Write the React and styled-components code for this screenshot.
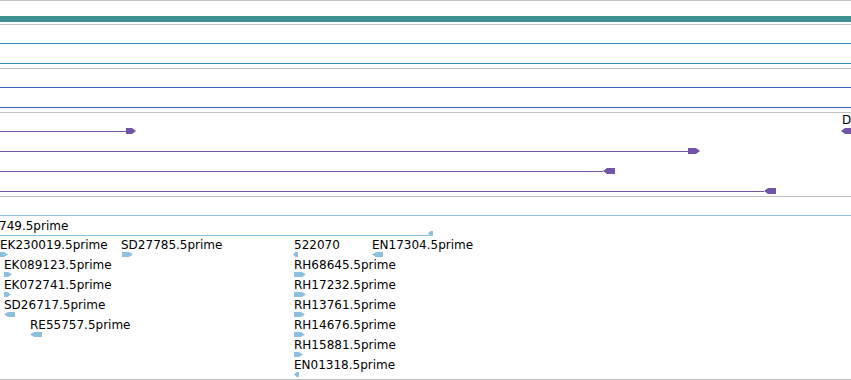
import React from "react";
import styled, { createGlobalStyle } from "styled-components";

const GlobalStyle = createGlobalStyle`
  html, body {
    margin: 0;
    padding: 0;
    background: #fff;
  }
  body {
    font-family: "DejaVu Sans", sans-serif;
    overflow: hidden;
  }
`;

const Browser = styled.div`
  width: 851px;
  height: 380px;
  display: flex;
  flex-direction: column;
  overflow: hidden;
  background: #fff;
`;

const Track = styled.div`
  position: relative;
  flex: none;
  box-sizing: border-box;
  display: flex;
  flex-direction: column;
  height: ${(p) => p.$h}px;
  padding-top: ${(p) => p.$pad || 0}px;
  border-top: 1px solid #c0c0c0;
  border-bottom: ${(p) => (p.$last ? "1px solid #c0c0c0" : "none")};
  overflow: hidden;
  box-sizing: content-box;
`;

// one 20px lane of a track; a 1px feature line sits 10px down
const Lane = styled.div`
  position: relative;
  flex: none;
  height: 20px;
  display: flex;
  align-items: flex-start;
`;

const Line = styled.div`
  flex: none;
  width: ${(p) => (p.$w ? `${p.$w}px` : "100%")};
  height: ${(p) => p.$thick || 1}px;
  margin-top: ${(p) => p.$mt ?? 10}px;
  background: ${(p) => p.$color};
`;

const Strand = styled.svg`
  flex: none;
  display: block;
  overflow: visible;
  margin-top: ${(p) => p.$mt || 0}px;
  margin-left: ${(p) => p.$ml || 0}px;
`;

const Label = styled.div`
  flex: none;
  font-size: 12px;
  line-height: 14px;
  color: #000;
  white-space: nowrap;
  margin-top: ${(p) => p.$mt || 0}px;
  margin-left: ${(p) => p.$ml || 0}px;
`;

// a named feature: label with its strand glyph under it, placed at its
// coordinate on the track
const Feature = styled.div.attrs((p) => ({ style: { left: p.$x } }))`
  position: absolute;
  top: ${(p) => p.$top || 0}px;
  display: flex;
  flex-direction: column;
  align-items: flex-start;
  gap: ${(p) => p.$gap || 0}px;
`;

const EndRow = styled.div`
  flex: none;
  height: 1px;
  display: flex;
  align-items: flex-end;
  margin-top: 2px;
  margin-bottom: 1px;
`;

const TEAL = "#3f9090";
const CYAN = "#2a8fae";
const BLUE = "#3a68bb";
const PURPLE = "#7254a8";
const LIGHT = "#8cbfe0";

function Arrow({ w, h = 6, dir = "r", color, ...rest }) {
  const tip = Math.min(4, w / 2);
  const pts =
    dir === "r"
      ? `0,0 ${w - tip},0 ${w},${h / 2} ${w - tip},${h} 0,${h}`
      : `${tip},0 ${w},0 ${w},${h} ${tip},${h} 0,${h / 2}`;
  return (
    <Strand width={w} height={h} {...rest}>
      <polygon points={pts} fill={color} />
    </Strand>
  );
}

const purple = [
  { end: 127, aw: 10, ml: -1, dir: "r" },
  { end: 690, aw: 12, ml: -2, dir: "r" },
  { end: 603, aw: 12, ml: 0, dir: "l" },
  { end: 764, aw: 12, ml: 0, dir: "l" },
];

const lanes = [
  [
    { x: 0, t: "EK230019.5prime", w: 8, dir: "r" },
    { x: 121, t: "SD27785.5prime", gx: 1, w: 11, dir: "r" },
    { x: 294, t: "522070", gx: -1, w: 5, dir: "l" },
    { x: 372, t: "EN17304.5prime", w: 11, dir: "l" },
  ],
  [
    { x: 4, t: "EK089123.5prime", w: 8, dir: "r" },
    { x: 294, t: "RH68645.5prime", w: 12, dir: "r" },
  ],
  [
    { x: 4, t: "EK072741.5prime", w: 7, dir: "r" },
    { x: 294, t: "RH17232.5prime", w: 12, dir: "r" },
  ],
  [
    { x: 4, t: "SD26717.5prime", w: 11, dir: "l" },
    { x: 294, t: "RH13761.5prime", w: 11, dir: "r" },
  ],
  [
    { x: 30, t: "RE55757.5prime", w: 12, dir: "l" },
    { x: 294, t: "RH14676.5prime", w: 11, dir: "r" },
  ],
  [{ x: 294, t: "RH15881.5prime", w: 9, dir: "r" }],
  [{ x: 294, t: "EN01318.5prime", w: 5, dir: "l" }],
];

export default function App() {
  return (
    <>
      <GlobalStyle />
      <Browser>
        <Track $h={8} $pad={15}>
          <Line $thick={6} $mt={0} $color={TEAL} />
        </Track>
        <Track $h={35} $pad={8}>
          <Lane>
            <Line $color={CYAN} />
          </Lane>
          <Lane>
            <Line $color={CYAN} />
          </Lane>
        </Track>
        <Track $h={35} $pad={8}>
          <Lane>
            <Line $color={BLUE} />
          </Lane>
          <Lane>
            <Line $color={BLUE} />
          </Lane>
        </Track>
        <Track $h={75} $pad={8}>
          {purple.map((f, i) => (
            <Lane key={i}>
              <Line $w={f.end} $color={PURPLE} />
              <Arrow w={f.aw} dir={f.dir} color={PURPLE} $mt={7} $ml={f.ml} />
            </Lane>
          ))}
          <Feature $x={842} $top={0} $gap={1}>
            <Label>D</Label>
            <Arrow w={12} dir="l" color={PURPLE} $ml={-1} />
          </Feature>
        </Track>
        <Track $h={164} $pad={18} $last>
          <Line $mt={0} $color={LIGHT} />
          <Label $mt={3} $ml={-1}>749.5prime</Label>
          <EndRow>
            <Line $w={431} $mt={0} $color={LIGHT} />
            <Arrow w={5} h={5} dir="l" color={LIGHT} $ml={-3} />
          </EndRow>
          {lanes.map((lane, i) => (
            <Lane key={i}>
              {lane.map((f) => (
                <Feature key={f.t} $x={f.x} $top={1}>
                  <Label>{f.t}</Label>
                  <Arrow w={f.w} h={5} dir={f.dir} color={LIGHT} $ml={f.gx || 0} />
                </Feature>
              ))}
            </Lane>
          ))}
        </Track>
      </Browser>
    </>
  );
}
